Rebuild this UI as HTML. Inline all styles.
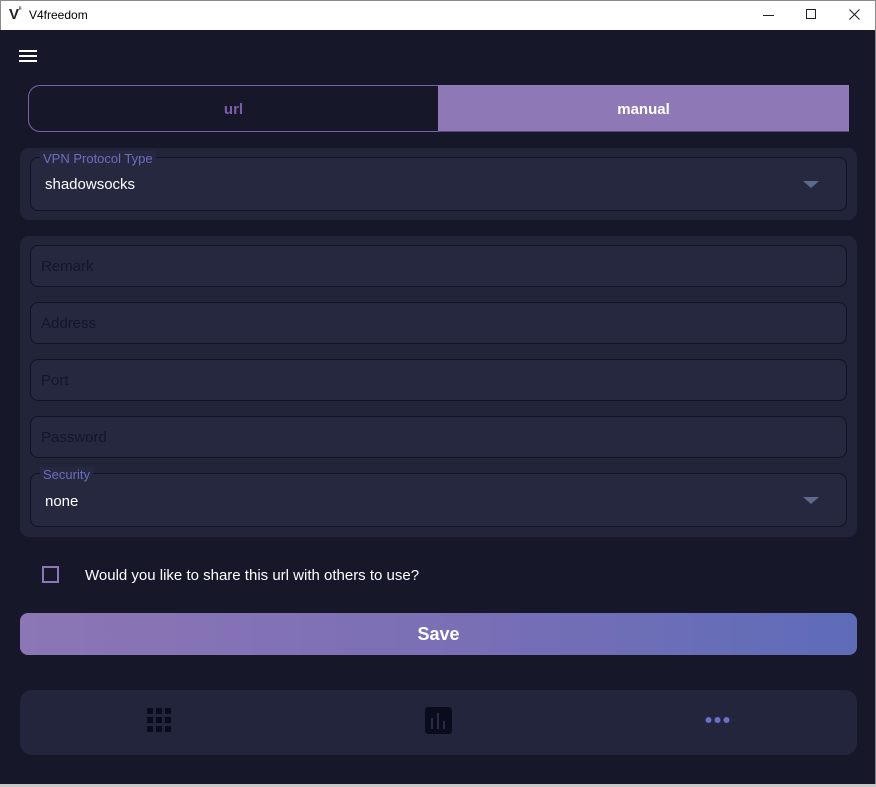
<!DOCTYPE html>
<html><head><meta charset="utf-8"><style>
*{margin:0;padding:0;box-sizing:border-box}
body{width:876px;height:787px;background:#161729;font-family:"Liberation Sans",sans-serif;position:relative;overflow:hidden}
.a{position:absolute}
.title{left:0;top:0;width:876px;height:30px;background:#fff;border:1px solid #8a8a8a;border-bottom:none}
.panel{background:#22243a;border-radius:9px}
.field{background:#26283f;border:1px solid #111224;border-radius:8px;left:30px;width:817px}
.ph{color:#14152a;font-size:15px;left:41px}
.lbl{color:#6b6fbf;font-size:13px;background:#26283f;padding:0 3px}
.val{color:#fff;font-size:15px}
.arr{width:0;height:0;border-left:8px solid transparent;border-right:8px solid transparent;border-top:7px solid #5d6a8b}
</style></head><body>
<div class="a title">
 <div class="a" style="left:8px;top:5px;font-weight:bold;font-size:15px;color:#222">V<span style="font-size:7px;vertical-align:top">ⁱⁱ</span></div>
 <div class="a" style="left:28px;top:7px;font-size:12px;color:#000">V4freedom</div>
 <div class="a" style="left:762px;top:14px;width:11px;height:1px;background:#222"></div>
 <div class="a" style="left:805px;top:8px;width:10px;height:10px;border:1px solid #222"></div>
 <svg class="a" style="left:848px;top:8px" width="11" height="11"><path d="M0.5 0.5L10.5 10.5M10.5 0.5L0.5 10.5" stroke="#222" stroke-width="1.1"/></svg>
</div>
<div class="a" style="left:875px;top:30px;width:1px;height:757px;background:#8a8a8a"></div>
<div class="a" style="left:0;top:784px;width:876px;height:3px;background:#c8c8c8"></div>
<div class="a" style="left:19px;top:50px;width:18px;height:2px;background:#fff;box-shadow:0 5px 0 #fff,0 10px 0 #fff"></div>

<div class="a" style="left:28px;top:85px;width:411px;height:47px;border:1.5px solid #7a62a6;border-right:none;border-radius:12px 0 0 12px"></div>
<div class="a" style="left:28px;top:101px;width:411px;text-align:center;color:#7b5ea7;font-weight:bold;font-size:15px">url</div>
<div class="a" style="left:438px;top:85px;width:411px;height:47px;background:#8e78b6;border-bottom:1px solid #5c4a80"></div>
<div class="a" style="left:438px;top:101px;width:411px;text-align:center;color:#fff;font-weight:bold;font-size:15px">manual</div>

<div class="a panel" style="left:20px;top:148px;width:837px;height:72px"></div>
<div class="a field" style="top:157px;height:54px"></div>
<div class="a lbl" style="left:40px;top:151px">VPN Protocol Type</div>
<div class="a val" style="left:45px;top:176px">shadowsocks</div>
<div class="a arr" style="left:803px;top:181px"></div>

<div class="a panel" style="left:20px;top:236px;width:837px;height:301px"></div>
<div class="a field" style="top:245px;height:42px"></div><div class="a ph" style="top:258px">Remark</div>
<div class="a field" style="top:302px;height:42px"></div><div class="a ph" style="top:315px">Address</div>
<div class="a field" style="top:359px;height:42px"></div><div class="a ph" style="top:372px">Port</div>
<div class="a field" style="top:416px;height:42px"></div><div class="a ph" style="top:429px">Password</div>
<div class="a field" style="top:473px;height:54px"></div>
<div class="a lbl" style="left:40px;top:467px">Security</div>
<div class="a val" style="left:45px;top:493px">none</div>
<div class="a arr" style="left:803px;top:497px"></div>

<div class="a" style="left:42px;top:566px;width:17px;height:17px;border:2px solid #8a76b8"></div>
<div class="a" style="left:85px;top:567px;color:#fff;font-size:15px">Would you like to share this url with others to use?</div>

<div class="a" style="left:20px;top:613px;width:837px;height:42px;border-radius:8px;background:linear-gradient(90deg,#8c76b5,#7b6fb5 50%,#5e6cb8)"></div>
<div class="a" style="left:20px;top:624px;width:837px;text-align:center;color:#fff;font-weight:bold;font-size:18px">Save</div>

<div class="a" style="left:20px;top:690px;width:837px;height:65px;background:#23253d;border-radius:12px"></div>
<svg class="a" style="left:147px;top:708px" width="26" height="25" viewBox="0 0 26 25"><g fill="#0a0b1c">
<rect x="0" y="0" width="6" height="6"/><rect x="9" y="0" width="6" height="6"/><rect x="18" y="0" width="6" height="6"/>
<rect x="0" y="9" width="6" height="6"/><rect x="9" y="9" width="6" height="6"/><rect x="18" y="9" width="6" height="6"/>
<rect x="0" y="18" width="6" height="6"/><rect x="9" y="18" width="6" height="6"/><rect x="18" y="18" width="6" height="6"/></g></svg>
<svg class="a" style="left:425px;top:707px" width="27" height="27" viewBox="0 0 27 27"><rect width="27" height="27" rx="3" fill="#0a0b1c"/>
<g fill="#2a2c45"><rect x="6" y="11" width="2" height="11"/><rect x="12" y="6" width="2" height="16"/><rect x="18" y="14" width="2" height="8"/></g></svg>
<svg class="a" style="left:705px;top:716px" width="25" height="8"><g fill="#6a6fc8"><circle cx="3.5" cy="4" r="3"/><circle cx="12.5" cy="4" r="3"/><circle cx="21.5" cy="4" r="3"/></g></svg>
</body></html>
